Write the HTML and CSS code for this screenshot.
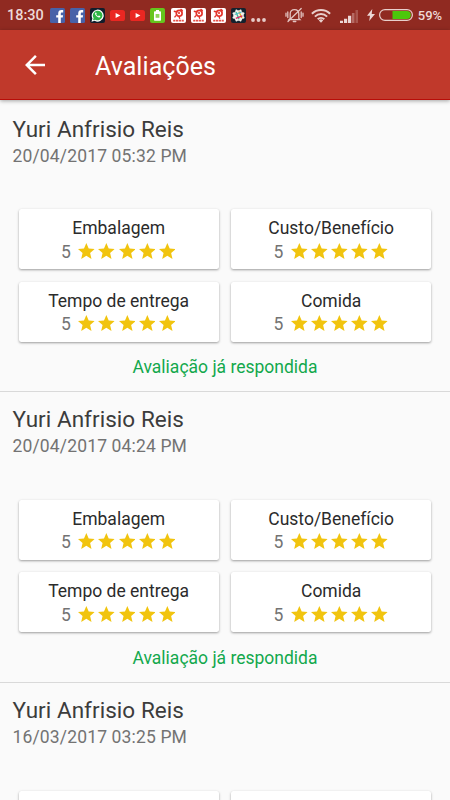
FILE: index.html
```html
<!DOCTYPE html>
<html lang="pt-BR">
<head>
<meta charset="utf-8">
<meta name="viewport" content="width=device-width, initial-scale=1">
<title>Avaliações</title>
<link rel="stylesheet" href="styles.css">
</head>
<body>
<svg class="defs" width="0" height="0" aria-hidden="true">
  <symbol id="fb" viewBox="0 0 15 15"><rect width="15" height="15" rx="1.5" fill="#4862a8"/><path d="M8.200 15V9.600H6.200V7.200h2V5.400c0-2.200 1.200-3.400 3.400-3.400h1.600v2.400h-1.300c-.8 0-1.100.4-1.100 1.100v1.700h2.300l-.4 2.400h-1.900V15z" fill="#fff"/></symbol>
  <symbol id="yt" viewBox="0 0 15 15"><rect y="2" width="15" height="11" rx="2.600" fill="#ea2722"/><path d="M5.600 5l4.800 2.500L5.600 10z" fill="#fff"/></symbol>
  <symbol id="bird" viewBox="0 0 15 15"><rect width="15" height="15" rx="2" fill="#fff"/><path d="M2.800 3.200l3.700.8M9.500 1.200l2.200 1.600" stroke="#e4342b" stroke-width="1.500"/><circle cx="8.200" cy="5.300" r="2.900" fill="none" stroke="#e4342b" stroke-width="1.700"/><circle cx="8" cy="5" r="1.100" fill="#e4342b"/><path d="M5 7.500l-1.500 1.800M7.800 8l1 2.700" stroke="#e4342b" stroke-width="1.300"/><path d="M2.200 12.700h10.600" stroke="#e4342b" stroke-width="1.700" stroke-dasharray="2.200 .6" opacity=".85"/></symbol>
  <symbol id="star" viewBox="2 2 20 19"><path d="M12 17.270L18.180 21l-1.640-7.030L22 9.240l-7.190-.61L12 2 9.190 8.630 2 9.240l5.460 4.730L5.820 21z" fill="#f1c40f"/></symbol>
</svg>

<div class="statusbar">
  <span class="clock">18:30</span>
  <div class="notices">
    <svg><use href="#fb"/></svg>
    <svg><use href="#fb"/></svg>
    <svg viewBox="0 0 15 15"><rect width="15" height="15" rx="2" fill="#111d2b"/><path d="M1.500 13.700l.9-3.300A6 6 0 1 1 4.700 12.800z" fill="#fff"/><path d="M3 12.200l.6-2.100a4.800 4.800 0 1 1 1.700 1.600z" fill="#2fb545"/><path d="M5.600 4.400c-1.400 1.200.4 3.300 1.400 4.200 1.100.9 2.700 1.500 3.300.2.200-.6-.1-.7-1.500-1.300l-.7.800c-.8-.3-1.500-1-1.900-1.800l.5-.7-.6-1.400z" fill="#fff"/></svg>
    <svg><use href="#yt"/></svg>
    <svg><use href="#yt"/></svg>
    <svg viewBox="0 0 15 15"><rect width="15" height="15" rx="2" fill="#65c51d"/><path d="M6 2h3v1.200h1.200a.8.800 0 0 1 .8.800v8a.8.800 0 0 1-.8.800H4.800A.8.800 0 0 1 4 12V4a.8.800 0 0 1 .8-.8H6z" fill="#fff"/><path d="M5.600 6h3.800v3.800H5.600z" fill="#8ed45a"/></svg>
    <svg><use href="#bird"/></svg>
    <svg><use href="#bird"/></svg>
    <svg><use href="#bird"/></svg>
    <svg viewBox="0 0 15 15"><rect width="15" height="15" rx="2" fill="#14222e"/><circle cx="7.500" cy="7.500" r="5.200" fill="#f3f3ee"/><g fill="none" stroke="#f3f3ee" stroke-width="2.200" stroke-linecap="round"><path d="M5.500 2.600l4 9.800M2.600 9.500l9.800-4M9.500 2.600l-4 9.800M2.600 5.500l9.800 4"/></g><g fill="none" stroke-width="1.300"><path d="M5 4l3 7.200" stroke="#3eb991"/><path d="M8 3.500l2.800 6.500" stroke="#e9a820"/><path d="M3.800 6.500l6.600-2.400" stroke="#53bfcc"/><path d="M4.800 10.300l6.600-2.500" stroke="#d62863"/></g></svg>
  </div>
  <svg class="more" viewBox="0 0 15 4"><g fill="#e6cbc8"><circle cx="2" cy="2" r="1.900"/><circle cx="7.500" cy="2" r="1.900"/><circle cx="13" cy="2" r="1.900"/></g></svg>
  <svg class="mute" viewBox="0 0 19 16"><g fill="none" stroke="#e3c4c1" stroke-width="1.300" stroke-linecap="round"><path d="M5.200 11.500V6.800c0-2.500 1.700-4.200 4.300-4.200s4.300 1.700 4.300 4.200v4.700l1.100 1.100H4.100zM8.300 14.500h2.500M3 14.500L16.200 1.500M2.800 5v5.500M1 6.200v3M16.200 5v5.500M18 6.200v3"/></g></svg>
  <svg class="wifi" viewBox="0 0 20 15"><g fill="none" stroke="#e8cfcc" stroke-width="2"><path d="M.9 5.700a13 13 0 0 1 18.200 0M3.900 8.600a8.700 8.700 0 0 1 12.200 0M6.700 11.300a4.800 4.800 0 0 1 6.600 0"/></g><path d="M7.800 12.400a3.200 3.200 0 0 1 4.400 0L10 14.700z" fill="#e8cfcc"/></svg>
  <svg class="signal" viewBox="0 0 18 13"><g fill="#ecd8d6"><path d="M0 10.700h3V13H0zM4 8.800h3.200V13H4zM8 5.800h3.200V13H8z"/><path d="M11.900 3h2.600v10h-2.600z" fill="#b66b64"/><path d="M15.500 0H18v13h-2.500z" fill="#a9564e"/></g></svg>
  <svg class="bolt" viewBox="0 0 8 12"><path d="M5.300 0L0 6.700h3L2.200 12 8 4.900H4.700z" fill="#ecd8d6"/></svg>
  <svg class="battery" viewBox="0 0 34 12"><rect x=".6" y=".6" width="32.800" height="10.800" rx="5.400" fill="none" stroke="#e8cfcc" stroke-width="1.200"/><path d="M13.500 2h14.300a4 4 0 0 1 0 8H13.500z" fill="#4cc70b"/></svg>
  <span class="level">59%</span>
</div>

<header class="appbar">
  <svg class="back" viewBox="0 0 20 20"><path d="M20 8.750H4.790L11.780 1.760 10 0 0 10l10 10 1.760-1.760L4.790 11.250H20z" fill="#fff"/></svg>
  <h1>Avaliações</h1>
</header>

<main id="list" class="list"></main>
<script src="app.js"></script>
</body>
</html>
```
FILE: styles.css
```css
* { box-sizing: border-box; }
html, body { height: 100%; }
body {
  margin: 0;
  overflow: hidden;
  display: flex;
  flex-direction: column;
  background: #fafafa;
  font-family: Roboto, "Liberation Sans", sans-serif;
}
.defs { position: absolute; }
svg { display: block; flex: none; }

.statusbar {
  flex: none;
  display: flex;
  align-items: center;
  height: 30px;
  padding-left: 7px;
  background: #902a21;
  color: #edd9d7;
}
.clock { width: 43px; font-size: 14.500px; font-weight: 500; line-height: 30px; padding-top: 2px; }
.notices { display: flex; gap: 5.100px; }
.notices svg { width: 15px; height: 15px; }
.more { width: 15px; height: 4px; margin: 9px 0 0 5.500px; }
.mute { width: 19px; height: 16px; margin-left: 19px; }
.wifi { width: 20px; height: 15px; margin-left: 7px; }
.signal { width: 18px; height: 13px; margin: 2px 0 0 8.500px; }
.bolt { width: 8px; height: 12px; margin-left: 9px; }
.battery { width: 34px; height: 12px; margin-left: 4px; }
.level { margin-left: 5px; font-size: 13px; font-weight: 500; line-height: 30px; padding-top: 1px; }

.appbar {
  flex: none;
  display: flex;
  align-items: center;
  height: 70px;
  padding: 4px 0 0 25px;
  background: #c0392b;
  border-bottom: 1px solid #b80d08;
  box-shadow: 0 1px 4px rgba(0, 0, 0, .35);
  z-index: 1;
}
.back { width: 20px; height: 20px; margin-top: -3px; }
.appbar h1 { margin: 0 0 0 50px; font-size: 25px; font-weight: 400; color: #fff; line-height: 30px; letter-spacing: .05px; }

.list { flex: 1; min-height: 0; overflow: hidden; }
.review {
  height: 290.800px;
  padding: 16px 18.700px 0;
}
.review + .review { border-top: 1px solid #d9d9d9; padding-top: 14.700px; }
.name, .date { margin: 0 0 0 -6.200px; font-weight: 400; }
.name { font-size: 22.500px; line-height: 27px; color: #3c3c3c; letter-spacing: .05px; }
.date { font-size: 17.500px; line-height: 21px; padding-top: 3px; height: 24px; color: #737373; letter-spacing: .15px; }
.grid {
  display: grid;
  grid-template-columns: 200px 200px;
  grid-auto-rows: 60px;
  gap: 12.500px;
  margin-top: 42.400px;
}
.card {
  padding-top: 9px;
  background: #fff;
  border-radius: 2.500px;
  box-shadow: 0 1px 2.500px rgba(0, 0, 0, .38);
  text-align: center;
}
.label { font-size: 17.500px; line-height: 21px; color: #2b2b2b; }
.score { display: flex; justify-content: center; align-items: center; height: 25px; padding-right: 1px; color: #737373; font-size: 17.500px; }
.stars { display: flex; gap: 3.400px; margin: -2px 0 0 7.500px; }
.stars svg { width: 16.700px; height: 16px; }
.answered { margin: 15.400px 0 0; text-align: center; font-size: 17.500px; line-height: 21px; color: #12a84c; }
```
FILE: app.js
```js
const reviews = [
  { date: "20/04/2017 05:32 PM", loaded: true },
  { date: "20/04/2017 04:24 PM", loaded: true },
  { date: "16/03/2017 03:25 PM", loaded: false }
];
const labels = ["Embalagem", "Custo/Benefício", "Tempo de entrega", "Comida"];
const stars = '<svg><use href="#star"/></svg>'.repeat(5);

const card = label => `
  <div class="card">
    <div class="label">${label}</div>
    <div class="score">5<div class="stars">${stars}</div></div>
  </div>`;
const emptyCards = '<div class="card"></div>'.repeat(2);

document.getElementById("list").innerHTML = reviews.map(({ date, loaded }) => `
  <section class="review">
    <h2 class="name">Yuri Anfrisio Reis</h2>
    <p class="date">${date}</p>
    <div class="grid">${loaded ? labels.map(card).join("") : emptyCards}</div>
    ${loaded ? '<p class="answered">Avaliação já respondida</p>' : ""}
  </section>`).join("");
```
